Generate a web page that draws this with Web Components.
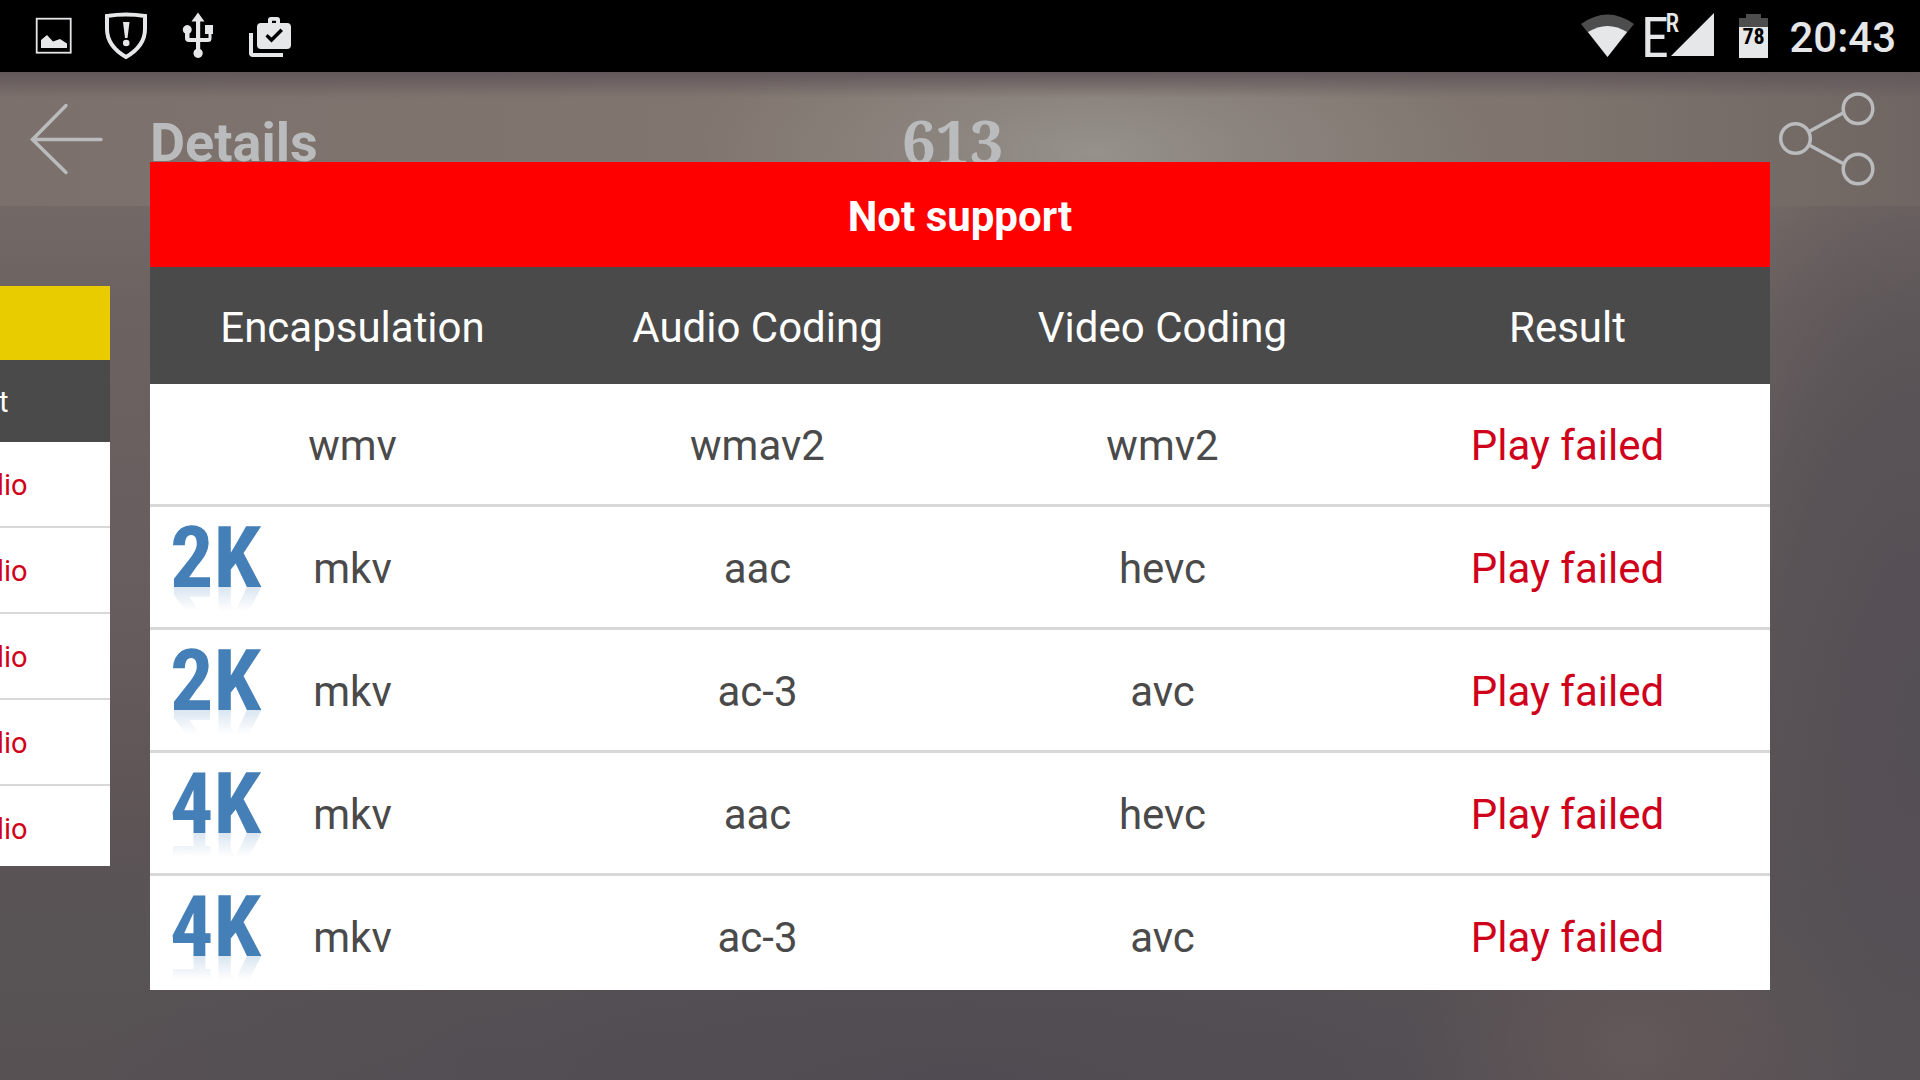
<!DOCTYPE html>
<html lang="en">
<head>
<meta charset="utf-8">
<title>Details</title>
<style>
html,body{height:100%}
body{margin:0;background:#5a5356;font-family:Roboto,"Noto Sans",sans-serif}
</style>
</head>
<body>
<details-screen></details-screen>
<script>
const define=(name,html,setup)=>{
  const t=document.createElement('template');t.innerHTML=html;
  customElements.define(name,class extends HTMLElement{
    constructor(){super();this.attachShadow({mode:'open'}).append(t.content.cloneNode(true))}
    connectedCallback(){if(setup)setup(this,this.shadowRoot)}
  });
};

define('status-bar',`
<style>
:host{display:flex;justify-content:space-between;align-items:center;height:72px;background:#000;color:#e6e7e9;padding:0 24px 0 28px}
.side{display:flex;align-items:center}
svg{display:block;flex:none}
time{font-size:42px;line-height:48px;font-weight:500;margin-left:20px;padding-top:4px}
</style>
<div class="side">
<svg width="280" height="72" viewBox="28 0 280 72" fill="#e6e7e9" aria-label="Notifications">
<rect x="36.7" y="18.7" width="34" height="34" fill="none" stroke="#e6e7e9" stroke-width="1.8"/>
<path d="M41 48V40L47 35L53 41.500L60 39L67 43.500V48Z"/>
<path d="M107 16Q126 13 145 16V29Q145 46 126 57Q107 46 107 29Z" fill="none" stroke="#e6e7e9" stroke-width="4"/>
<path d="M123 22H129.500L127.500 38H125Z"/><circle cx="126.200" cy="43" r="3.300"/>
<path d="M198 12.500L204.500 21.500H200.200V38H208.500V34H205V25H213V34H211.500V38.500Q211.500 42 208 42H200.200V49A4.700 4.700 0 1 1 196 49V42H189Q185 42 185 38V33.500A4.500 4.500 0 1 1 189.500 33.500V38H196V21.500H191.500Z"/>
<path fill-rule="evenodd" d="M268 23V20Q268 17 271 17H277Q280 17 280 20V23H287Q291 23 291 27V45Q291 49 287 49H261Q257 49 257 45V27Q257 23 261 23ZM272 23H276V20.800H272ZM267.500 34L265.500 36.500L271.500 42.500L283 31L280.500 28.500L271.500 37.500Z"/>
<path d="M249 33H253V53H283V57H253Q249 57 249 53Z"/>
</svg>
</div>
<div class="side">
<svg width="190" height="72" viewBox="1579 0 190 72" fill="#e6e7e9" aria-label="Wi-Fi, roaming signal, battery" font-family="Roboto Condensed,Liberation Sans Narrow,sans-serif">
<path d="M1581 24Q1607.500 5 1634 24L1607.500 57Z" fill="#4d4d4d"/>
<path d="M1588 32Q1607.500 20 1627 32L1607.500 57Z"/>
<text x="1641" y="57" font-size="56">E</text>
<text x="1665.500" y="32" font-size="25" font-weight="500">R</text>
<path d="M1671 56L1714 13V56Z"/>
<path d="M1739 18H1746V14H1761V18H1768V28H1739Z" fill="#4d4d4d"/>
<rect x="1739" y="27" width="29" height="31"/>
<text x="1753.500" y="44" font-size="22" font-weight="700" fill="#000" text-anchor="middle">78</text>
</svg>
<time>20:43</time>
</div>`);

define('title-bar',`
<style>
:host{display:grid;grid-template-columns:1fr auto 1fr;align-items:center;height:134px;padding:0 45px 0 30px;box-sizing:border-box;color:#b9bbbd;
background:linear-gradient(#62575a 0,#62575a00 26px),radial-gradient(ellipse 400px 150px at 57% 60%,#96918b,#928d8799 40%,#81766f00),linear-gradient(90deg,#7b706b,#81766f 40%,#7f756e 80%,#6f6562)}
.start{display:flex;align-items:center;gap:47px}
.end{display:flex;justify-content:flex-end}
button{display:block;border:0;padding:0;background:none;color:inherit}
svg{display:block;fill:none;stroke:currentColor;stroke-linecap:round}
h1{margin:8px 0 0;font-size:54px;line-height:64px;font-weight:700}
output{font:700 60px/64px "Noto Serif","Liberation Serif",serif;padding-top:4px}
</style>
<div class="start"><button aria-label="Back"><svg width="73" height="72" viewBox="0 0 73 72" stroke-width="3.500"><path d="M36 2.500L2.500 36.500L36 69.500M2.500 36.500H71"/></svg></button><h1>Details</h1></div>
<output>613</output>
<div class="end"><button aria-label="Share"><svg width="96" height="94" viewBox="0 0 96 94" stroke-width="3.500"><circle cx="16.500" cy="46.500" r="14.800"/><circle cx="79" cy="16.700" r="14.800"/><circle cx="79" cy="77" r="14.800"/><path d="M31 39L64 21M31 53.500L64 71.500"/></svg></button></div>`);

define('resolution-badge',`
<style>
:host{display:block;color:#447fb8;font:700 86px/86px "Roboto Condensed","Liberation Sans Narrow",sans-serif;-webkit-box-reflect:below -28px linear-gradient(transparent 56%,#0003 84%)}
</style><slot></slot>`);

define('result-card',`
<style>
:host{display:block;background:#fff;color:#4a4a4a;font-size:42px;line-height:48px;--line:3px}
:host([small]){font-size:29px;line-height:34px;--line:2px}
table{width:100%;border-collapse:separate;border-spacing:0;table-layout:fixed}
caption{background:var(--tone,red);color:#fff;font-weight:700;padding:31px 0 26px}
th{background:#4a4a4a;color:#fff;font-weight:400;padding:37px 0 32px}
td{position:relative;text-align:center;padding:38px 0 34px;border-bottom:var(--line) solid #d8d8d8}
tr:last-child td{border:0;padding-bottom:28px}
:host([small]) caption{padding:20px 0;height:34px}
:host([small]) th{padding:25px 0 23px}
:host([small]) td{padding:26px 0 24px}
:host([small]) tr:last-child td{padding-bottom:20px}
td:last-child{color:#d0021b}
resolution-badge{position:absolute;left:20px;top:8px}
</style>
<table><caption></caption><thead><tr></tr></thead><tbody></tbody></table>`,(el,root)=>{
  const d=JSON.parse(el.querySelector('script').textContent);
  root.querySelector('caption').textContent=d.title;
  for(const c of d.columns){const th=document.createElement('th');th.scope='col';th.textContent=c;root.querySelector('thead tr').append(th)}
  for(const [badge,...cells] of d.rows){
    const tr=document.createElement('tr');
    cells.forEach((c,i)=>{
      const td=document.createElement('td');
      if(badge&&!i){const b=document.createElement('resolution-badge');b.textContent=badge;td.append(b)}
      td.append(c);tr.append(td);
    });
    root.querySelector('tbody').append(tr);
  }
});

define('details-screen',`
<style>
:host{display:flex;flex-direction:column;min-height:100vh;position:relative;overflow:hidden;
background:radial-gradient(ellipse 230px 180px at 85% 97%,#66595acc,#66595a00),radial-gradient(ellipse 260px 620px at 100% 66%,#544e55,#565155cc 55%,#56515500),radial-gradient(ellipse 900px 200px at 50% 100%,#4f4b52,#4f4b5200),linear-gradient(#746a66 17%,#6c6261 28%,#675d5e 55%,#5d5456 76%,#585355 86%,#575154)}
main{position:absolute;inset:72px 0 0;display:flex;align-items:center;gap:40px;padding-right:150px}
.peek{width:110px;overflow:hidden;display:flex;justify-content:flex-end}
.peek result-card{flex:none;width:284px;--tone:#e9cc00}
.front{flex:1}
</style>
<status-bar></status-bar>
<title-bar></title-bar>
<main>
<div class="peek"><result-card small><script type="application/json">{"title":"","columns":["Result"],"rows":[["","No Audio"],["","No Audio"],["","No Audio"],["","No Audio"],["","No Audio"]]}<\/script></result-card></div>
<result-card class="front"><script type="application/json">{"title":"Not support","columns":["Encapsulation","Audio Coding","Video Coding","Result"],"rows":[["","wmv","wmav2","wmv2","Play failed"],["2K","mkv","aac","hevc","Play failed"],["2K","mkv","ac-3","avc","Play failed"],["4K","mkv","aac","hevc","Play failed"],["4K","mkv","ac-3","avc","Play failed"]]}<\/script></result-card>
</main>`);
</script>
</body>
</html>
